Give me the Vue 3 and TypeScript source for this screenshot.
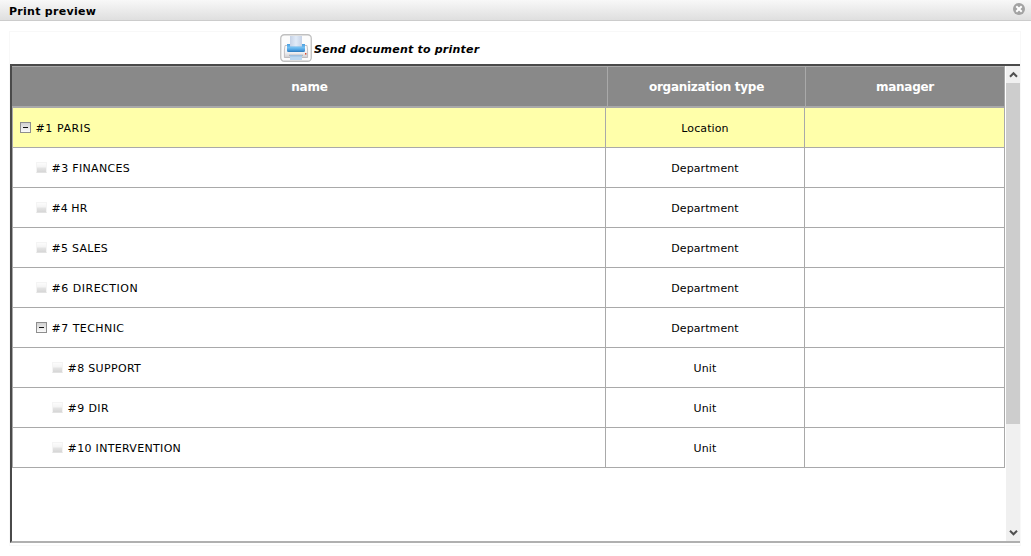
<script setup lang="ts">
interface OrgRow {
  id: number
  name: string
  kind: string
  level: number
  open?: boolean
  tracking: number
}

const rows: OrgRow[] = [
  { id: 1, name: 'PARIS', kind: 'Location', level: 0, open: true, tracking: 0.55 },
  { id: 3, name: 'FINANCES', kind: 'Department', level: 1, tracking: 0.33 },
  { id: 4, name: 'HR', kind: 'Department', level: 1, tracking: 0.02 },
  { id: 5, name: 'SALES', kind: 'Department', level: 1, tracking: 0.25 },
  { id: 6, name: 'DIRECTION', kind: 'Department', level: 1, tracking: 0.5 },
  { id: 7, name: 'TECHNIC', kind: 'Department', level: 1, open: true, tracking: 0.44 },
  { id: 8, name: 'SUPPORT', kind: 'Unit', level: 2, tracking: 0.33 },
  { id: 9, name: 'DIR', kind: 'Unit', level: 2, tracking: 0.38 },
  { id: 10, name: 'INTERVENTION', kind: 'Unit', level: 2, tracking: 0.32 },
]
</script>

<template>
  <div class="window">
    <header class="titlebar">
      <span class="title">Print preview</span>
      <svg class="close" width="12" height="12" viewBox="0 0 12 12">
        <circle cx="6" cy="6" r="6" fill="#a3a3a3" />
        <path d="M4 4L8 8M8 4L4 8" stroke="#fff" stroke-width="2" stroke-linecap="square" />
      </svg>
    </header>
    <main class="panel">
      <div class="toolbar">
        <svg class="printer" width="32" height="28" viewBox="0 0 32 28">
          <defs>
            <linearGradient id="blue" x1="0" y1="0" x2="0" y2="1">
              <stop offset="0" stop-color="#4b9fe0" />
              <stop offset="0.45" stop-color="#74c0f2" />
              <stop offset="0.75" stop-color="#4c9fe0" />
              <stop offset="1" stop-color="#2b79ba" />
            </linearGradient>
            <linearGradient id="paper" x1="0" y1="0" x2="1" y2="0">
              <stop offset="0" stop-color="#c6d2e6" />
              <stop offset="0.5" stop-color="#e1ebf8" />
              <stop offset="1" stop-color="#c6d2e6" />
            </linearGradient>
            <linearGradient id="shell" x1="0" y1="0" x2="0" y2="1">
              <stop offset="0" stop-color="#ffffff" />
              <stop offset="0.6" stop-color="#efeff1" />
              <stop offset="1" stop-color="#cfcdd0" />
            </linearGradient>
          </defs>
          <rect x="0.75" y="0.75" width="30.5" height="26.5" rx="3.5" fill="#fcfcfc" stroke="#c0c0c0" stroke-width="1.3" />
          <path d="M5 11.5H27L27.6 16V23.5H4.4V16Z" fill="url(#shell)" stroke="#b5b3b6" stroke-width="0.8" />
          <rect x="10" y="2" width="12" height="11" fill="url(#paper)" />
          <path d="M7 10H10V12.5H22V10H25V16.7Q25 18 23.5 18H8.5Q7 18 7 16.7Z" fill="url(#blue)" />
          <rect x="9" y="20.8" width="14" height="0.8" fill="#9b9ca4" />
          <rect x="10" y="21.3" width="12" height="4.7" fill="#bcd8f0" />
          <path d="M10 21.9H22" stroke="#86b3da" stroke-width="0.8" />
          <rect x="25" y="19" width="1.4" height="1.6" fill="#d8492f" />
        </svg>
        <span class="send">Send document to printer</span>
      </div>
      <section class="grid">
        <div class="content">
          <div class="head">
            <div class="th"><span class="th-name">name</span></div>
            <div class="th"><span class="th-type">organization type</span></div>
            <div class="th"><span class="th-manager">manager</span></div>
          </div>
          <div v-for="row in rows" :key="row.id" class="row" :class="['level-' + row.level, { selected: row.id === 1 }]">
            <div class="name">
              <svg v-if="row.open" class="toggle" width="11" height="11" shape-rendering="crispEdges">
                <defs>
                  <linearGradient :id="'face' + row.id" x1="0" y1="0" x2="0" y2="1">
                    <stop offset="0" stop-color="#d2d2d2" />
                    <stop offset="1" stop-color="#fafafa" />
                  </linearGradient>
                </defs>
                <rect width="11" height="11" fill="#8e8e8e" />
                <rect x="1" y="1" width="9" height="9" :fill="'url(#face' + row.id + ')'" />
                <rect x="3" y="5" width="5" height="1" fill="#111" />
              </svg>
              <i v-else class="leaf"></i>
              <span class="label" :style="{ letterSpacing: row.tracking + 'px' }">#{{ row.id }} {{ row.name }}</span>
            </div>
            <div class="kind"><span>{{ row.kind }}</span></div>
            <div class="manager"></div>
          </div>
        </div>
        <div class="scrollbar">
          <svg class="arrow" width="14" height="17" viewBox="0 0 14 17">
            <path d="M4 10.7L7.5 7.2L11 10.7" fill="none" stroke="#505050" stroke-width="2" />
          </svg>
          <div class="track"><div class="thumb"></div></div>
          <svg class="arrow" width="14" height="17" viewBox="0 0 14 17">
            <path d="M4 6.8L7.5 10.3L11 6.8" fill="none" stroke="#505050" stroke-width="2" />
          </svg>
        </div>
      </section>
    </main>
  </div>
</template>

<style>
body {
  margin: 0;
  background: #fff;
  overflow: hidden;
}
</style>

<style scoped>
.window {
  width: 1031px;
  height: 556px;
  box-sizing: border-box;
  background: #fff;
  color: #000;
  font: 11px/14px Verdana, "DejaVu Sans", sans-serif;
}
.window * {
  box-sizing: border-box;
}
.titlebar {
  display: flex;
  justify-content: space-between;
  height: 21px;
  padding: 3px 6px 0 9px;
  border-bottom: 1px solid #ccc;
  background: linear-gradient(#f8f8f8, #dfdfdf);
}
.title {
  margin-top: 1px;
  font-weight: bold;
  line-height: 15px;
  letter-spacing: 0.28px;
}
.close {
  display: block;
}
.panel {
  width: 1012px;
  height: 515px;
  margin: 10px 0 0 9px;
  border: 1px solid #f8f8f8;
}
.toolbar {
  display: flex;
  height: 32px;
  padding: 2px 0 0 270px;
}
.printer {
  display: block;
  flex: none;
}
.send {
  margin: 9px 0 0 2px;
  font-weight: bold;
  font-style: italic;
  white-space: nowrap;
  letter-spacing: 0.21px;
}
.grid {
  display: flex;
  justify-content: space-between;
  height: 479px;
  border: solid #4a4a4a;
  border-width: 2px 0 2px 2px;
  border-bottom-color: #b0b0b0;
}
.content {
  width: 993px;
}
.head {
  display: grid;
  grid-template-columns: 596px 198px 199px;
  height: 42px;
  border: 1px solid #a9a9a9;
  border-width: 1px 1px 2px 0;
  background: #898989;
}
.th {
  display: flex;
  align-items: center;
  justify-content: center;
  border-right: 1px solid #a9a9a9;
  color: #fff;
  font-size: 12px;
  font-weight: bold;
}
.th:last-child {
  border-right: 0;
}
.th-name {
  letter-spacing: -0.15px;
}
.th-type {
  letter-spacing: -0.27px;
}
.th-manager {
  margin-right: 1px;
  letter-spacing: -0.3px;
}
.row {
  display: grid;
  grid-template-columns: 594px 199px 200px;
  height: 40px;
}
.name,
.kind,
.manager {
  display: flex;
  align-items: center;
  border: 1px solid #a9a9a9;
  border-width: 0 1px 1px 0;
}
.name {
  padding-left: 7px;
  border-left-width: 1px;
}
.level-1 .name {
  padding-left: 23px;
}
.level-2 .name {
  padding-left: 39px;
}
.selected {
  background: #ffffaa;
}
.kind {
  justify-content: center;
  letter-spacing: 0.1px;
}
.toggle {
  flex: none;
}
.leaf {
  width: 11px;
  height: 11px;
  border: 1px solid #f4f4f4;
  border-bottom-color: #e2e2e2;
  background: linear-gradient(#fcfcfc, #f4f4f4 45%, #e4e4e4 55%, #d6d6d6);
}
.label {
  margin: 2px 0 0 4.6px;
  white-space: nowrap;
}
.kind span {
  margin-top: 2px;
}
.scrollbar {
  display: flex;
  flex-direction: column;
  width: 14px;
  background: #f0f0f0;
}
.arrow {
  display: block;
  flex: none;
}
.track {
  flex: 1;
}
.thumb {
  height: 341px;
  background: #cdcdcd;
}
</style>
